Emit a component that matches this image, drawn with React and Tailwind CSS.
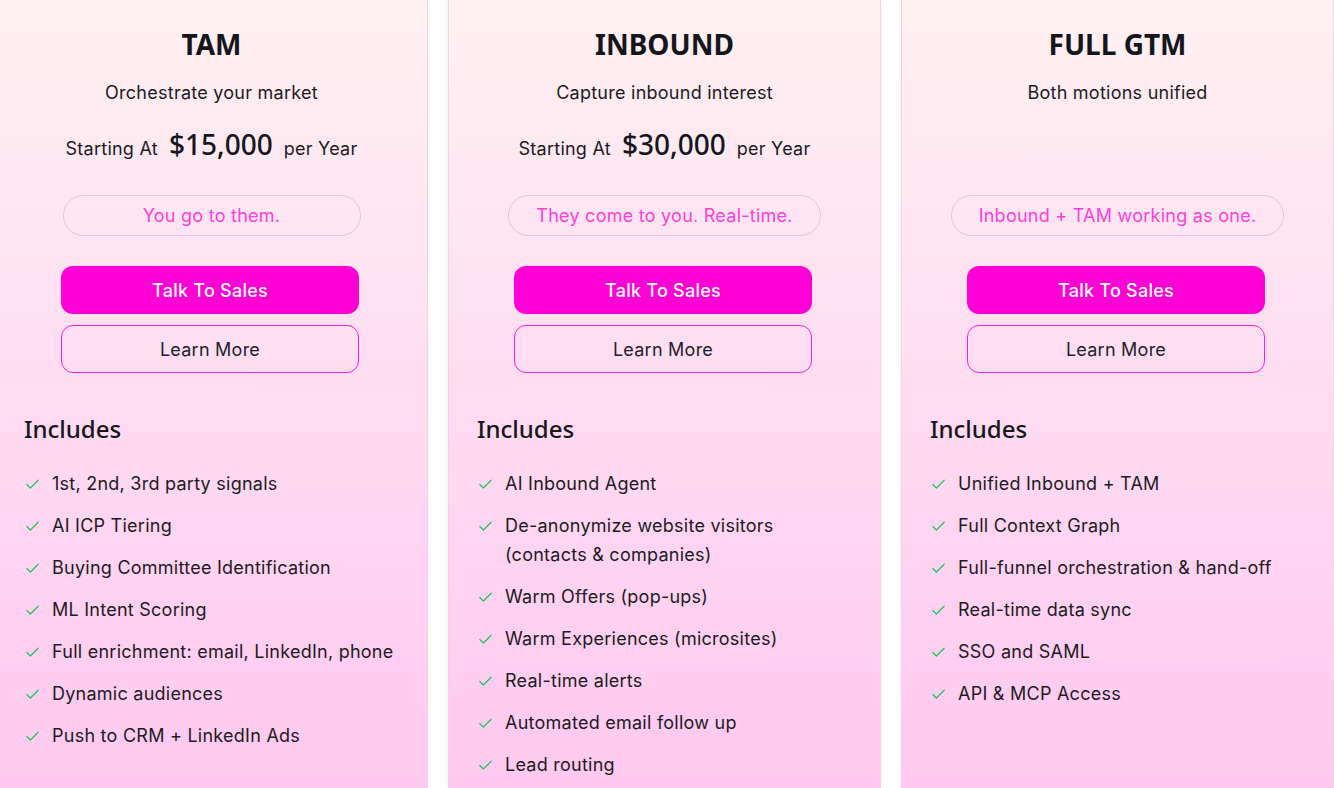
import { Check } from 'lucide-react';

const plans = [
  {
    name: 'TAM',
    tagline: 'Orchestrate your market',
    price: '$15,000',
    pill: 'You go to them.',
    features: [
      '1st, 2nd, 3rd party signals',
      'AI ICP Tiering',
      'Buying Committee Identification',
      'ML Intent Scoring',
      'Full enrichment: email, LinkedIn, phone',
      'Dynamic audiences',
      'Push to CRM + LinkedIn Ads',
    ],
  },
  {
    name: 'INBOUND',
    tagline: 'Capture inbound interest',
    price: '$30,000',
    pill: 'They come to you. Real-time.',
    features: [
      'AI Inbound Agent',
      'De-anonymize website visitors (contacts & companies)',
      'Warm Offers (pop-ups)',
      'Warm Experiences (microsites)',
      'Real-time alerts',
      'Automated email follow up',
      'Lead routing',
    ],
  },
  {
    name: 'FULL GTM',
    tagline: 'Both motions unified',
    price: null,
    pill: 'Inbound + TAM working as one.',
    features: [
      'Unified Inbound + TAM',
      'Full Context Graph',
      'Full-funnel orchestration & hand-off',
      'Real-time data sync',
      'SSO and SAML',
      'API & MCP Access',
    ],
  },
];

const heading = { fontFamily: '"Noto Sans", "Open Sans", sans-serif' };

function PlanCard({ plan }) {
  return (
    <div className="w-[433px] h-[788px] shrink-0 border-x border-[#efd3e2] bg-linear-to-b from-[#fff1f2] via-[#ffdcf1] to-[#ffc8f0] px-[28px] pt-[26px] text-[18px] tracking-[0.25px] text-[#1c1b24] shadow-[0_0_4px_rgba(200,150,180,0.25)]">
      {/* Header */}
      <h2 style={heading} className="text-center text-[28px] font-bold leading-[36px] tracking-normal text-[#14161c]">
        {plan.name}
      </h2>
      <p className="mt-[19px] text-center leading-[24px]">{plan.tagline}</p>

      <div className="mt-[21px] flex h-[36px] items-baseline justify-center gap-[11px]">
        {plan.price && (
          <>
            <span>Starting At</span>
            <span style={heading} className="text-[28px] font-medium leading-[36px] tracking-normal text-[#14161c]">{plan.price}</span>
            <span>per Year</span>
          </>
        )}
      </div>

      {/* Pill */}
      <div className="mt-[33px] flex justify-center">
        <div className="flex h-[41px] min-w-[298px] items-center justify-center rounded-full border border-[#e3c3d8] px-[27px] text-[#ff3fd9]">
          {plan.pill}
        </div>
      </div>

      {/* Actions */}
      <div className="mt-[30px] flex flex-col items-center gap-[11px] pr-[3px]">
        <button className="h-[48px] w-[298px] rounded-xl bg-[#ff00d5] font-medium tracking-[0.25px] text-white">
          Talk To Sales
        </button>
        <button className="h-[48px] w-[298px] rounded-xl border border-[#ff1fd8] tracking-[0.25px] text-[#22212b]">
          Learn More
        </button>
      </div>

      {/* Includes */}
      <h3 style={heading} className="mt-[40px] text-[24px] font-medium leading-[32px] tracking-normal text-[#17161e]">
        Includes
      </h3>
      <ul className="mt-[24px] flex flex-col gap-[13px]">
        {plan.features.map((f) => (
          <li key={f} className="flex items-start gap-[11px] leading-[29px]">
            <Check className="mt-[7px] h-[17px] w-[17px] shrink-0 text-[#22c55e]" strokeWidth={1.75} />
            <span>{f}</span>
          </li>
        ))}
      </ul>
    </div>
  );
}

export default function App() {
  return (
    <div
      className="h-[788px] w-[1334px] overflow-hidden bg-white"
      style={{ fontFamily: 'Inter, "Noto Sans", sans-serif' }}
    >
      <div className="-ml-[5px] flex gap-[20px]">
        {plans.map((p) => (
          <PlanCard key={p.name} plan={p} />
        ))}
      </div>
    </div>
  );
}
